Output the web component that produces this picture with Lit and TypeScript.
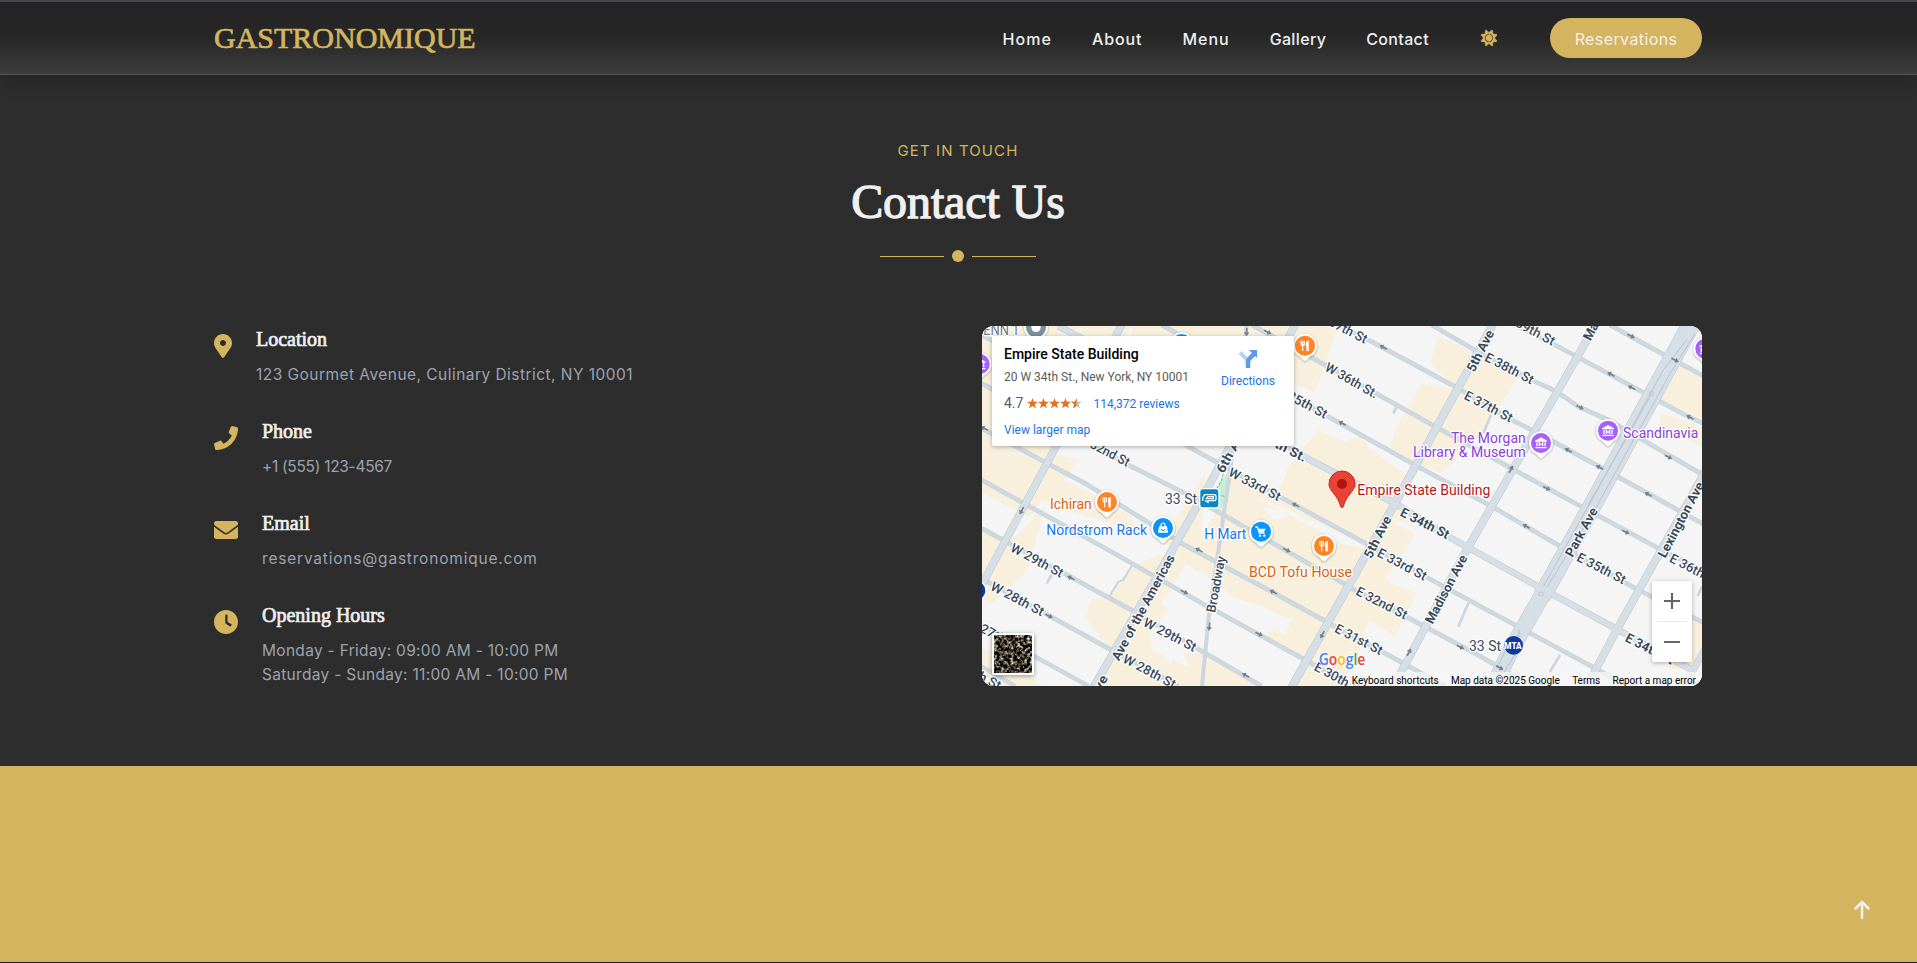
import { LitElement, html, css, svg } from "lit";
import { customElement } from "lit/decorators.js";

const ICONS: Record<string, { box: string; cls: string; d: string }> = {
  pin: {
    box: "0 0 384 512",
    cls: "icon narrow",
    d: "M172.268 501.67C26.97 291.031 0 269.413 0 192 0 85.961 85.961 0 192 0s192 85.961 192 192c0 77.413-26.97 99.031-172.268 309.67-9.535 13.774-29.93 13.773-39.464 0zM192 256c35 0 64-29 64-64s-29-64-64-64-64 29-64 64 29 64 64 64z",
  },
  phone: {
    box: "0 0 512 512",
    cls: "icon",
    d: "M493.4 24.6l-104-24c-11.3-2.6-22.9 3.3-27.5 13.9l-48 112c-4.2 9.8-1.4 21.3 6.9 28l60.6 49.6c-36 76.7-98.9 140.5-177.2 177.2l-49.6-60.6c-6.8-8.3-18.2-11.1-28-6.9l-112 48C3.9 366.5-2 378.1.6 389.4l24 104C27.1 504.2 36.7 512 48 512c256.1 0 464-207.5 464-464 0-11.2-7.7-20.9-18.6-23.4z",
  },
  mail: {
    box: "0 0 512 512",
    cls: "icon",
    d: "M502.3 190.8c3.9-3.1 9.7-.2 9.7 4.7V400c0 26.5-21.5 48-48 48H48c-26.5 0-48-21.5-48-48V195.6c0-5 5.7-7.8 9.7-4.7 22.4 17.4 52.1 39.5 154.1 113.6 21.1 15.4 56.7 47.8 92.2 47.6 35.7.3 72-32.8 92.3-47.6 102-74.1 131.6-96.3 154-113.7zM256 320c23.2.4 56.6-29.2 73.4-41.4 132.7-96.3 142.8-104.7 173.4-128.7 5.8-4.5 9.2-11.5 9.2-18.9v-19c0-26.5-21.5-48-48-48H48c-26.5 0-48 21.5-48 48v19c0 7.4 3.4 14.3 9.2 18.9 30.6 23.9 40.7 32.4 173.4 128.7 16.8 12.2 50.2 41.8 73.4 41.4z",
  },
  clock: {
    box: "0 0 512 512",
    cls: "icon",
    d: "M256,0C115,0,0,115,0,256S115,512,256,512,512,397,512,256,397,0,256,0Zm120 321l-20,25a16,16,0,0,1-22.49,2.5l-75-49.72a40,40,0,0,1-18-31.23V112a16,16,0,0,1,16-16h16a16,16,0,0,1,16,16V256l78,42.5A16,16,0,0,1,376,321Z",
  },
  sun: {
    box: "-12 -12 536 536",
    cls: "sun",
    d: "M256 160c-52.9 0-96 43.1-96 96s43.1 96 96 96 96-43.1 96-96-43.1-96-96-96zm246.4 80.5l-94.7-47.3 33.5-100.4c4.5-13.6-8.4-26.5-21.9-21.9l-100.4 33.5-47.4-94.8c-6.4-12.8-24.6-12.8-31 0l-47.3 94.7L92.7 70.8c-13.6-4.5-26.5 8.4-21.9 21.9l33.5 100.4-94.7 47.4c-12.8 6.4-12.8 24.6 0 31l94.7 47.3-33.5 100.5c-4.5 13.6 8.4 26.5 21.9 21.9l100.4-33.5 47.3 94.7c6.4 12.8 24.6 12.8 31 0l47.3-94.7 100.4 33.5c13.6 4.5 26.5-8.4 21.9-21.9l-33.5-100.4 94.7-47.3c13-6.5 13-24.7.2-31.1zm-155.9 106c-49.9 49.9-131.1 49.9-181 0-49.9-49.9-49.9-131.1 0-181 49.9-49.9 131.1-49.9 181 0 49.9 49.9 49.9 131.1 0 181z",
  },
};

const icon = (name: string) => {
  const i = ICONS[name];
  return html`<svg class=${i.cls} viewBox=${i.box}><path fill-rule="evenodd" d=${i.d}></path></svg>`;
};

/* ---------- street map data: three units per screen pixel ---------- */

// Commercial blocks, tinted beige.
const ZONES = [
  "21,18 470,18 360,200 300,320 160,480 60,450 21,470",
  "120,380 230,400 310,420 270,480 350,520 470,590 480,640 380,600 300,580 200,540 165,590 60,540 21,520 21,460 80,430",
  "21,620 110,660 210,560 230,600 150,760 50,850 21,840",
  "470,18 1090,18 1065,90 1020,215 900,170 960,560 880,540 760,520 770,380 720,380 470,200",
  "720,500 760,525 815,520 870,545 1100,670 1190,690 1130,800 1075,920 1000,1025 860,950 950,900 840,850 780,835 665,745 680,640 720,580",
  "690,460 560,660 670,760 690,470",
  "1030,330 1110,365 1160,345 1180,380 1300,470 1255,535 1310,610 1240,600 1320,640 1230,780 1325,820 1260,950 1180,900 1150,1000 1098,1098 950,1098 1060,900 1190,680 870,540 900,540 940,440",
  "1390,50 1530,110 1440,200 1365,130",
  "1340,190 1440,210 1530,100 1630,170 1520,340 1400,460 1240,400 1260,330",
  "400,830 500,715 590,700 640,720 560,850 580,870 520,950 640,1098 370,1098 410,1000 330,890 350,840",
  "640,1000 690,1000 850,1090 840,1098 560,1098 600,1000",
  "21,980 160,1060 200,1098 60,1098 21,1060",
  "2090,120 2181,160 2181,300 2040,230",
  "2060,280 2181,320 2181,380 2050,320",
  "2130,900 2181,910 2181,1040 2080,1050",
];

// Plain blocks laid over the beige ones.
const PLAIN = [
  "60,60 300,150 420,200 520,360 360,380 160,330 60,280",
  "210,560 350,600 560,700 470,740 400,830 360,800 160,740",
  "860,560 940,575 940,590 900,600",
  "770,378 955,378 940,440 905,535 765,455",
  "820,855 950,900 930,945 830,880",
  "290,1040 380,1080 360,1098 250,1080",
  "530,920 620,980 640,1040 530,990",
];

type Road = [string, number];

const STREETS: Road[] = [
  ["20,1040 120,1098", 13],
  ["20,915 180,1010 340,1098", 13],
  ["20,775 400,985 610,1098", 14],
  ["20,625 460,865 860,1098", 14],
  ["20,480 400,690 690,855 1000,1025 1130,1098", 14],
  ["20,325 330,490 620,670 890,815 1090,925 1230,1000 1410,1098", 14],
  ["20,190 470,440 640,525 930,690 1130,805 1350,920 1500,1000 1670,1098", 14],
  ["20,45 640,380 960,555 1190,680 1370,780 1620,915 1870,1050 1960,1098", 14],
  ["560,15 950,230 1060,290 1320,435 1560,565 1740,670 1990,810 2190,910", 14],
  ["830,15 1005,110 1390,325 1600,440 1810,555 2060,690 2190,755", 14],
  ["1080,10 1190,65 1450,205 1610,300 1680,335 1910,460 2190,615", 14],
  ["1370,15 1525,105 1670,180 1745,215 1810,260 1900,300 2090,410 2190,468", 14],
  ["1620,15 1740,75 1880,150 2000,215 2130,285 2190,313", 14],
  ["1905,15 2050,95 2190,170", 14],
  ["470,738 445,780 430,785 400,835", 6],
  ["1270,250 1255,280", 8],
  ["1548,285 1525,340", 8],
  ["1480,850 1450,920", 8],
  ["1755,1005 1725,1055", 8],
  ["230,765 215,790", 8],
  ["2181,800 2168,828", 8],
];

const AVENUES: Road[] = [
  ["250,18 930,375 1005,420 1260,550 1430,655 1690,800 1930,930 2160,1055", 20],
  ["440,15 240,385 20,795", 23],
  ["960,15 700,500 580,710 380,1060 350,1110", 24],
  ["1553,15 1260,550 945,1110", 25],
  ["1862,15 1475,690 1250,1110", 24],
  ["2190,455 1925,930 1830,1110", 24],
  ["2190,985 2130,1098", 20],
  ["2150,10 1850,560 1700,830", 56],
  ["1705,820 1610,985 1550,1110", 50],
];

const BROADWAY = "815,15 765,460 745,590 700,900 680,1110";

// x1, y1, x2, y2, text, weight
type Label = [number, number, number, number, string, number];

const LABELS: Label[] = [
  [1065, 2, 1175, 59, "37th St", 500],
  [1054, 138, 1207, 224, "W 36th St.", 500],
  [900, 202, 1055, 284, "W 35th St", 500],
  [818, 325, 993, 414, "W 34th St.", 700],
  [312, 350, 462, 428, "W 32nd St", 500],
  [764, 453, 915, 531, "W 33rd St", 500],
  [110, 680, 263, 761, "W 29th St", 500],
  [50, 795, 205, 877, "W 28th St", 500],
  [-22, 900, 133, 982, "W 27th St", 500],
  [-78, 1016, 76, 1098, "W 26th St", 500],
  [508, 903, 662, 984, "W 29th St", 500],
  [447, 1013, 600, 1094, "W 28th St", 500],
  [733, 455, 805, 325, "6th Ave", 700],
  [420, 1018, 588, 706, "Ave of the Americas", 700],
  [315, 1197, 388, 1068, "6th Ave", 700],
  [706, 877, 738, 708, "Broadway", 500],
  [1021, 1037, 1162, 1112, "E 30th St", 500],
  [1083, 922, 1221, 993, "E 31st St", 500],
  [1146, 810, 1295, 886, "E 32nd St", 500],
  [1210, 695, 1353, 770, "E 33rd St", 500],
  [1279, 573, 1421, 645, "E 34th St", 700],
  [1809, 708, 1950, 781, "E 35th St", 500],
  [2087, 711, 2228, 785, "E 36th St", 500],
  [1471, 223, 1611, 295, "E 37th St", 500],
  [1533, 108, 1674, 181, "E 38th St", 500],
  [1596, -10, 1738, 65, "E 39th St", 500],
  [1954, 950, 2095, 1022, "E 34th St", 700],
  [1485, 152, 1546, 32, "5th Ave", 700],
  [1176, 711, 1238, 590, "5th Ave", 700],
  [1360, 908, 1466, 707, "Madison Ave", 700],
  [1834, 58, 1940, -143, "Madison Ave", 700],
  [1780, 707, 1857, 565, "Park Ave", 700],
  [2058, 710, 2176, 488, "Lexington Ave", 700],
];

// x, y, heading in degrees
const ARROWS: [number, number, number][] = [
  [815, 36, 92], [878, 36, 27], [140, 572, 118], [288, 774, 208], [222, 888, 27],
  [628, 816, 27], [672, 690, 208], [935, 690, 27], [962, 555, 208], [1102, 310, 208],
  [895, 816, 208], [703, 920, 96], [852, 942, 27], [1042, 944, 118], [812, 1066, 208],
  [1225, 82, 208], [1968, 48, 27], [2100, 120, 27], [1908, 163, 208], [1970, 203, 208],
  [1815, 262, 27], [2145, 292, 208], [2080, 411, 27], [1780, 391, 208], [1874, 442, 208],
  [1608, 448, -62], [1715, 505, 27], [2020, 523, 208], [1654, 619, 208], [1952, 636, 27],
  [1456, 981, 27], [1574, 1043, 27], [1302, 997, -62], [28, 325, 208],
];

const GLYPHS: Record<string, unknown> = {
  food: svg`<path d="M-12,-15v11q0,4 5,4t5,-4v-11M-7,-15v31" fill="none" stroke="#fff" stroke-width="3.500"></path><path d="M5,16v-14h-2v-10q1,-6 8,-7v31h-4" fill="#fff" stroke="#fff"></path>`,
  museum: svg`<path d="M-18,-7 0,-17 18,-7v3h-36zM-14,-2h4v12h-4zM10,-2h4v12h-4zM-17,12h34v4h-34zM-7,-3h4v5h6v-5h4v13h-4v-4h-6v4h-4z" fill="#fff"></path>`,
  bag: svg`<path d="M-12,-5h24l3,19h-30z" fill="#fff"></path><path d="M-6,-4v-5a6,6 0 0 1 12,0v5" fill="none" stroke="#fff" stroke-width="3.500"></path><path d="M-5,3a5,5 0 0 0 10,0" fill="none" stroke="#0a93fb" stroke-width="3"></path>`,
  cart: svg`<path d="M-17,-14h6l6,18h16" fill="none" stroke="#fff" stroke-width="4"></path><path d="M-8,-9h22l-5,10h-14z" fill="#fff"></path><circle cx="-3" cy="12" r="3.500" fill="#fff"></circle><circle cx="10" cy="12" r="3.500" fill="#fff"></circle>`,
  dot: svg`<circle r="14" fill="#fff"></circle>`,
};

const PINS: [number, number, string, string][] = [
  [183, 22, "#7b919c", "dot"],
  [620, 72, "#0a93fb", "bag"],
  [14, 132, "#a95ffb", "museum"],
  [990, 77, "#ff8426", "food"],
  [396, 546, "#ff8426", "food"],
  [564, 624, "#0a93fb", "bag"],
  [858, 635, "#0a93fb", "cart"],
  [1047, 678, "#ff8426", "food"],
  [1698, 369, "#a95ffb", "museum"],
  [1899, 332, "#a95ffb", "museum"],
  [2191, 86, "#a95ffb", "museum"],
];

// x, baseline, width, text, colour
const PLACES: [number, number, number, string, string][] = [
  [0, 45, 133, "PENN 1", "#6b7c88"],
  [225, 567, 125, "Ichiran", "#d9620b"],
  [214, 645, 302, "Nordstrom Rack", "#1a73e8"],
  [688, 657, 126, "H Mart", "#1a73e8"],
  [822, 771, 309, "BCD Tofu House", "#d9620b"],
  [570, 552, 96, "33 St", "#3b4c5f"],
  [1482, 992, 96, "33 St", "#3b4c5f"],
  [1428, 369, 224, "The Morgan", "#8a3fd6"],
  [1314, 411, 338, "Library & Museum", "#8a3fd6"],
  [1944, 354, 226, "Scandinavia", "#8a3fd6"],
  [1147, 525, 399, "Empire State Building", "#b31919"],
];

@customElement("street-map")
export class StreetMap extends LitElement {
  static styles = css`
    :host {
      display: grid;
      width: 720px;
      height: 360px;
      border-radius: 12px;
      overflow: hidden;
      position: relative;
      font-family: Roboto, sans-serif;
      background: #f5f5f5;
    }
    .canvas { width: 720px; height: 360px; display: block; }
    .road-label { font-size: 39px; fill: #38495b; stroke: #fff; stroke-width: 7px; paint-order: stroke; stroke-linejoin: round; }
    .place { font-size: 42px; stroke: #fff; stroke-width: 7px; paint-order: stroke; stroke-linejoin: round; }
    .mta { font-size: 26px; font-weight: 900; fill: #fff; }
    .brand { font-family: "Open Sans", sans-serif; font-size: 50px; font-weight: 600; stroke: #fff; stroke-width: 4px; paint-order: stroke; }
    .card {
      position: absolute; left: 10px; top: 10px; width: 302px; height: 110px; box-sizing: border-box;
      padding: 9px 12px; background: #fff; border-radius: 2px; box-shadow: 0 1px 4px rgba(0,0,0,.3);
      display: flex; justify-content: space-between; font-size: 12px; color: #5b5b5b;
    }
    .title { font-size: 14px; line-height: 18px; font-weight: 500; color: #000; }
    .address { line-height: 16px; margin-top: 6px; white-space: nowrap; }
    .rating { display: flex; align-items: center; margin-top: 8px; line-height: 18px; }
    .score { font-size: 14px; }
    .stars { width: 55px; height: 11px; margin: 0 11px 0 4px; }
    .reviews { padding-top: 2px; }
    .link { color: #1a73e8; }
    .larger { margin-top: 9px; line-height: 16px; }
    .directions { width: 54px; margin-right: 7px; padding-top: 4px; display: flex; flex-direction: column; align-items: center; }
    .turn { width: 20px; height: 20px; }
    .directions .link { margin-top: 4px; line-height: 16px; }
    .thumb { position: absolute; left: 10px; bottom: 11px; width: 38px; height: 38px; border: 2px solid #fff; border-radius: 2px; box-shadow: 0 1px 4px rgba(0,0,0,.4); }
    .zoom {
      position: absolute; right: 10px; bottom: 24px; width: 40px; height: 81px; background: #fff; border-radius: 2px;
      box-shadow: 0 1px 4px rgba(0,0,0,.3); display: block;
    }
    .legal {
      position: absolute; right: 0; bottom: 0; height: 14px; box-sizing: border-box; padding: 3px 6px 0 4px;
      display: flex; align-items: center; gap: 12.300px;
      background: rgba(245,245,245,.75); color: #000; font-size: 10px; line-height: 11px; white-space: nowrap;
    }
  `;

  private roads(list: Road[], edge: string, fill: string) {
    return svg`
      ${list.map(([p, w]) => svg`<polyline points=${p} fill="none" stroke=${edge} stroke-width=${w} stroke-linejoin="round"></polyline>`)}
      ${list.map(([p, w]) => svg`<polyline points=${p} fill="none" stroke=${fill} stroke-width=${w - 3} stroke-linejoin="round"></polyline>`)}`;
  }

  private label([x1, y1, x2, y2, text, weight]: Label) {
    const len = Math.hypot(x2 - x1, y2 - y1);
    const deg = (Math.atan2(y2 - y1, x2 - x1) * 180) / Math.PI;
    return svg`<text class="road-label" transform="translate(${x1} ${y1}) rotate(${deg})" y="14"
      font-weight=${weight} textLength=${len} lengthAdjust="spacingAndGlyphs">${text}</text>`;
  }

  render() {
    return html`
      <svg class="canvas" viewBox="21 18 2160 1080">
        <defs>
          <filter id="drop" x="-30%" y="-30%" width="160%" height="160%">
            <feDropShadow dx="0" dy="2" stdDeviation="2.5" flood-opacity=".4"></feDropShadow>
          </filter>
        </defs>
        <rect x="21" y="18" width="2160" height="1080" fill="#f5f5f5"></rect>
        ${ZONES.map((p) => svg`<polygon points=${p} fill="#f8f0dd"></polygon>`)}
        ${PLAIN.map((p) => svg`<polygon points=${p} fill="#f5f5f5"></polygon>`)}
        <polygon points="765,445 712,520 735,570 748,550" fill="#c5efd5"></polygon>
        <path d="M745,460 738,485 728,500 722,520 750,530" fill="none" stroke="#6fb4a4" stroke-width="3" stroke-dasharray="10 4"></path>
        ${this.roads(STREETS, "#c7d2da", "#ced8df")}
        <polyline points=${BROADWAY} fill="none" stroke="#cdd6df" stroke-width="12"></polyline>
        ${this.roads(AVENUES, "#bcc8d2", "#d6dee6")}
        <path d="M2135,60 2065,150 1850,540 1705,800M2160,40 2080,170 1870,550 1717,800M2028,225 1840,555M1595,985 1565,1045M1622,1000 1585,1060" fill="none" stroke="#b9c3cf" stroke-width="3"></path>
        <path d="M1692,817h12v10h-12zM2024,215h10v12h-10zM1632,930l4,18h-8z" fill="none" stroke="#b9c3cf" stroke-width="2.5"></path>
        ${ARROWS.map(([x, y, a]) => svg`<path transform="translate(${x} ${y}) rotate(${a})" d="M-12,-2.5H1V-8L13,0 1,8V2.5H-12z" fill="#76818c"></path>`)}
        ${LABELS.map((l) => this.label(l))}
        ${PINS.map(([x, y, c, g]) => svg`<g transform="translate(${x} ${y})">
          <path filter="url(#drop)" d="M0,46C-5,46 -9,36 -22,28A35.500,35.500 0 1 1 22,28C9,36 5,46 0,46Z" fill="#fff"></path>
          <circle r="30" fill=${c}></circle>${GLYPHS[g]}</g>`)}
        <circle cx="3" cy="812" r="30" fill="#0a3aa0" stroke="#fff" stroke-width="4"></circle>
        <rect x="674" y="506" width="58" height="58" rx="9" fill="#0a88c4" stroke="#fff" stroke-width="4"></rect>
        <path d="M683,542v-8l6,-10h28q7,0 6,8v6q-1,4 -6,4h-18v5l-9,-6M694,536l5,-6h16v6z" fill="none" stroke="#fff" stroke-width="4"></path>
        <circle cx="1616" cy="976" r="28" fill="#0a3aa0"></circle>
        <text class="mta" x="1588" y="986" textLength="52" lengthAdjust="spacingAndGlyphs">MTA</text>
        ${PLACES.map(([x, y, w, t, c]) => svg`<text class="place" x=${x} y=${y} fill=${c} textLength=${w} lengthAdjust="spacingAndGlyphs">${t}</text>`)}
        <path d="M1101,563C1096,563 1095,549 1088,537C1078,520 1062,508 1062,492A39,39 0 0 1 1140,492C1140,508 1124,520 1114,537C1107,549 1106,563 1101,563Z" fill="#ea4335" stroke="#c5221f" stroke-width="3"></path>
        <circle cx="1101" cy="492" r="15" fill="#b31412"></circle>
        <text class="brand" x="1031" y="1034" textLength="140" lengthAdjust="spacingAndGlyphs"><tspan fill="#4285f4">G</tspan><tspan fill="#ea4335">o</tspan><tspan fill="#fbbc04">o</tspan><tspan fill="#4285f4">g</tspan><tspan fill="#34a853">l</tspan><tspan fill="#ea4335">e</tspan></text>
      </svg>

      <div class="card">
        <div>
          <div class="title">Empire State Building</div>
          <div class="address">20 W 34th St., New York, NY 10001</div>
          <div class="rating">
            <span class="score">4.7</span>
            <svg class="stars" viewBox="0 0 55 11">
              ${[0, 1, 2, 3, 4].map((i) => svg`<path transform="translate(${i * 11} 0)" d="M5.500 0 6.900 3.800H11L7.800 6.300 8.900 10.300 5.500 8 2.100 10.300 3.200 6.300 0 3.800H4.100z" fill=${i < 4 ? "#e7711b" : "#c4c4c4"}></path>`)}
              <path d="M49.500 0V8L46.100 10.300 47.200 6.300 44 3.800H48.100z" fill="#e7711b"></path>
            </svg>
            <span class="link reviews">114,372 reviews</span>
          </div>
          <div class="link larger">View larger map</div>
        </div>
        <div class="directions">
          <svg class="turn" viewBox="0 0 20 20">
            <path d="M2 3.500 8.500 10V12" fill="none" stroke="#b5d3fa" stroke-width="4"></path>
            <path d="M10 19V13Q10 10.500 12 9L16 5" fill="none" stroke="#5c9ce6" stroke-width="4.500"></path>
            <path d="M11 1H19V9z" fill="#5c9ce6"></path>
          </svg>
          <span class="link">Directions</span>
        </div>
      </div>

      <svg class="thumb" viewBox="0 0 38 38">
        <filter id="roofs" x="0" y="0" width="100%" height="100%" color-interpolation-filters="sRGB">
          <feTurbulence type="fractalNoise" baseFrequency=".3" numOctaves="3" seed="7"></feTurbulence>
          <feColorMatrix type="matrix" values="2.200 .15 .15 0 -1  2.200 .15 .1 0 -1  2.100 .1 .15 0 -1  0 0 0 0 1"></feColorMatrix>
        </filter>
        <rect width="38" height="38" filter="url(#roofs)"></rect>
      </svg>

      <svg class="zoom" viewBox="0 0 40 81">
        <path d="M12 20H28M20 12V28M12 61H28" stroke="#666" stroke-width="2.200"></path>
        <path d="M5 40.500H35" stroke="#e6e6e6"></path>
      </svg>

      <div class="legal">
        <span>Keyboard shortcuts</span><span>Map data ©2025 Google</span><span>Terms</span><span>Report a map error</span>
      </div>
    `;
  }
}

// Each text carries its own tracking, in pixels.
type Tracked = [string, number];

@customElement("app-root")
export class AppRoot extends LitElement {
  static styles = css`
    :host {
      display: flex;
      flex-direction: column;
      height: 963px;
      overflow: hidden;
      background: #2d2d2d;
      color: #f0f0f0;
      font-family: Inter, sans-serif;
      font-size: 16px;
      line-height: 24px;
    }
    .header {
      box-sizing: border-box; height: 75px; flex: none;
      border-top: 2px solid #464850; border-bottom: 1px solid #535353;
      background: linear-gradient(#242424, #272727 50%, #3d3d3d);
      box-shadow: 0 6px 16px rgba(0,0,0,.22);
    }
    .bar { width: 1489px; box-sizing: border-box; padding-right: 1px; height: 100%; margin: 0 auto; display: flex; align-items: center; justify-content: space-between; }
    .logo { font: 30px/36px "Liberation Serif", serif; color: #d4b45f; -webkit-text-stroke: .7px #d4b45f; }
    .nav { display: flex; align-items: center; font-weight: 500; }
    .links { display: flex; gap: 40px; padding-top: 1px; }
    .sun { width: 18px; height: 18px; fill: #d4b45f; stroke: #d4b45f; stroke-width: 16; transform: rotate(22.500deg); margin: 0 52px 0 51px; }
    .book {
      width: 152px; height: 40px; box-sizing: border-box; padding-top: 1px; border-radius: 20px; background: #d4b45f; color: #f5f0e6;
      display: flex; align-items: center; justify-content: center; letter-spacing: .4px; font-weight: 400;
    }
    .main { flex: none; width: 1489px; height: 691px; margin: 0 auto; box-sizing: border-box; padding: 64px 1px 0 0; }
    .heading { display: flex; flex-direction: column; align-items: center; height: 187px; }
    .eyebrow { color: #d4b45f; font-size: 15px; letter-spacing: 1.100px; font-weight: 400; }
    .h2 { font: 48px/48px "Liberation Serif", serif; -webkit-text-stroke: 1.300px #f0f0f0; margin: 15px 0 24px; letter-spacing: -.1px; }
    .divider { display: flex; align-items: center; gap: 8px; }
    .rule { width: 64px; height: 1px; background: #d4b45f; }
    .dot { width: 12px; height: 12px; border-radius: 50%; background: #d4b45f; }
    .cols { display: grid; grid-template-columns: 720px 720px; gap: 48px; align-items: start; }
    .info { display: flex; flex-direction: column; gap: 31px; }
    .item { display: flex; gap: 24px; }
    .icon { width: 24px; height: 24px; margin-top: 8px; fill: #d4b45f; flex: none; }
    .narrow { width: 18px; }
    .h3 { font: 20px/27px "Liberation Serif", serif; -webkit-text-stroke: .7px #f0f0f0; margin-bottom: 10px; }
    .text { color: #9ca3af; font-weight: 400; font-size: 15.500px; }
    .band { flex: none; height: 196px; background: #d4b45f; display: flex; justify-content: flex-end; align-items: flex-end; border-bottom: 1px solid #1a1a1a; }
    .up { width: 16px; height: 20px; margin: 0 47px 42px 0; }
  `;

  private links: Tracked[] = [["Home", 1.05], ["About", 0.9], ["Menu", 1], ["Gallery", 0.35], ["Contact", 0.35]];
  private items: { icon: string; title: string; lines: Tracked[] }[] = [
    { icon: "pin", title: "Location", lines: [["123 Gourmet Avenue, Culinary District, NY 10001", 0.46]] },
    { icon: "phone", title: "Phone", lines: [["+1 (555) 123-4567", -0.3]] },
    { icon: "mail", title: "Email", lines: [["reservations@gastronomique.com", 0.8]] },
    { icon: "clock", title: "Opening Hours", lines: [["Monday - Friday: 09:00 AM - 10:00 PM", 0.3], ["Saturday - Sunday: 11:00 AM - 10:00 PM", 0.3]] },
  ];

  render() {
    return html`
      <div class="header">
        <div class="bar">
          <div class="logo">GASTRONOMIQUE</div>
          <div class="nav">
            <div class="links">${this.links.map(([t, k]) => html`<span style="letter-spacing:${k}px">${t}</span>`)}</div>
            ${icon("sun")}
            <div class="book">Reservations</div>
          </div>
        </div>
      </div>
      <div class="main">
        <div class="heading">
          <div class="eyebrow">GET IN TOUCH</div>
          <div class="h2">Contact Us</div>
          <div class="divider"><span class="rule"></span><span class="dot"></span><span class="rule"></span></div>
        </div>
        <div class="cols">
          <div class="info">
            ${this.items.map((i) => html`
              <div class="item">
                ${icon(i.icon)}
                <div>
                  <div class="h3">${i.title}</div>
                  ${i.lines.map(([t, k]) => html`<div class="text" style="letter-spacing:${k}px">${t}</div>`)}
                </div>
              </div>`)}
          </div>
          <street-map></street-map>
        </div>
      </div>
      <div class="band">
        <svg class="up" viewBox="0 0 16 20"><path d="M8 18V2.500M1.500 8.500 8 2 14.500 8.500" fill="none" stroke="#f0f0f0" stroke-width="2.600" stroke-linecap="round" stroke-linejoin="round"></path></svg>
      </div>
    `;
  }
}
